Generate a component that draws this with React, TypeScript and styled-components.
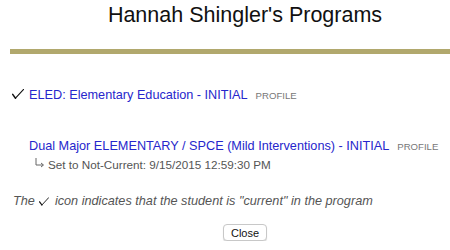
import React from "react";
import styled, { createGlobalStyle } from "styled-components";

const Global = createGlobalStyle`
  html, body { margin: 0; padding: 0; background: #fff; overflow: hidden; }
  body { font-family: "Liberation Sans", Arial, sans-serif; }
  * { box-sizing: border-box; }
`;

const Page = styled.div`
  width: 440px;
  margin-left: 10px;
  padding-top: 3px;
`;

const Title = styled.h1`
  margin: 0;
  padding-left: 30px;
  font-size: 21.5px;
  font-weight: normal;
  color: #111;
  text-align: center;
  line-height: 25px;
`;

const Rule = styled.div`
  height: 5px;
  background: #b1a86d;
  margin-top: 21px;
`;

const List = styled.div`
  display: flex;
  flex-direction: column;
  padding-top: 33px;
`;

const Program = styled.div<{ $gap: number }>`
  display: flex;
  flex-direction: column;
  margin-top: ${(p) => p.$gap}px;
`;

const Row = styled.div`
  display: flex;
  align-items: baseline;
  height: 16px;
  line-height: 16px;
`;

const CheckSlot = styled.span`
  display: inline-flex;
  width: 19px;
  padding-left: 2px;
  align-self: center;
  margin-top: -3px;
`;

const CheckIcon = styled.svg<{ $w: number }>`
  width: ${(p) => p.$w}px;
  height: ${(p) => Math.round(p.$w * 0.85)}px;
  display: block;
`;

const Check = ({ w }: { w: number }) => (
  <CheckIcon $w={w} viewBox="0 0 12 10">
    <path d="M0.7 5.4 L3.5 9.2" fill="none" stroke="#111" strokeWidth="1.5" strokeLinecap="round" />
    <path d="M3.5 9.2 L11.6 0.4" fill="none" stroke="#111" strokeWidth="1.1" strokeLinecap="round" />
  </CheckIcon>
);

const Link = styled.a`
  color: #2626cc;
  font-size: 12.7px;
  text-decoration: none;
`;

const Tag = styled.span`
  color: #777;
  font-size: 9.6px;
  margin-left: 8px;
`;

const Sub = styled.div`
  display: flex;
  align-items: flex-end;
  padding-left: 25px;
  margin-top: 3px;
  color: #555;
  font-size: 11.7px;
  line-height: 16px;
  gap: 4px;
`;

const Arrow = styled.svg`
  width: 9px;
  height: 10px;
  margin-bottom: 5px;
`;

const Note = styled.p`
  display: flex;
  align-items: baseline;
  margin: 20px 0 0 3px;
  font-style: italic;
  font-size: 12.7px;
  color: #555;
  line-height: 16px;
  white-space: pre;
`;

const NoteCheck = styled.span`
  display: inline-flex;
  margin: 0 6px 0 4px;
  align-self: center;
`;

const Footer = styled.div`
  display: flex;
  justify-content: center;
  padding-left: 30px;
  margin-top: 15px;
`;

const Button = styled.button`
  font-family: "Liberation Sans", Arial, sans-serif;
  font-size: 11px;
  color: #111;
  background: #fff;
  border: 1px solid #c8c8c8;
  border-radius: 4px;
  box-shadow: 0 1px 1px rgba(0,0,0,0.15);
  height: 17px;
  width: 44px;
  padding: 0;
`;

export default function App() {
  return (
    <>
      <Global />
      <Page>
        <Title>Hannah Shingler's Programs</Title>
        <Rule />
        <List>
          <Program $gap={0}>
            <Row>
              <CheckSlot><Check w={12} /></CheckSlot>
              <Link href="#">ELED: Elementary Education - INITIAL</Link>
              <Tag>PROFILE</Tag>
            </Row>
          </Program>
          <Program $gap={35}>
            <Row>
              <CheckSlot />
              <Link href="#">Dual Major ELEMENTARY / SPCE (Mild Interventions) - INITIAL</Link>
              <Tag>PROFILE</Tag>
            </Row>
            <Sub>
              <Arrow viewBox="0 0 9 10">
                <path d="M1 0 V7 H8" fill="none" stroke="#666" strokeWidth="1" />
                <path d="M6 5 L8.5 7 L6 9" fill="none" stroke="#666" strokeWidth="1" />
              </Arrow>
              <span>Set to Not-Current: 9/15/2015 12:59:30 PM</span>
            </Sub>
          </Program>
        </List>
        <Note>
          <span>The</span>
          <NoteCheck><Check w={10} /></NoteCheck>
          <span>icon indicates that the student is "current" in the program</span>
        </Note>
        <Footer>
          <Button>Close</Button>
        </Footer>
      </Page>
    </>
  );
}
